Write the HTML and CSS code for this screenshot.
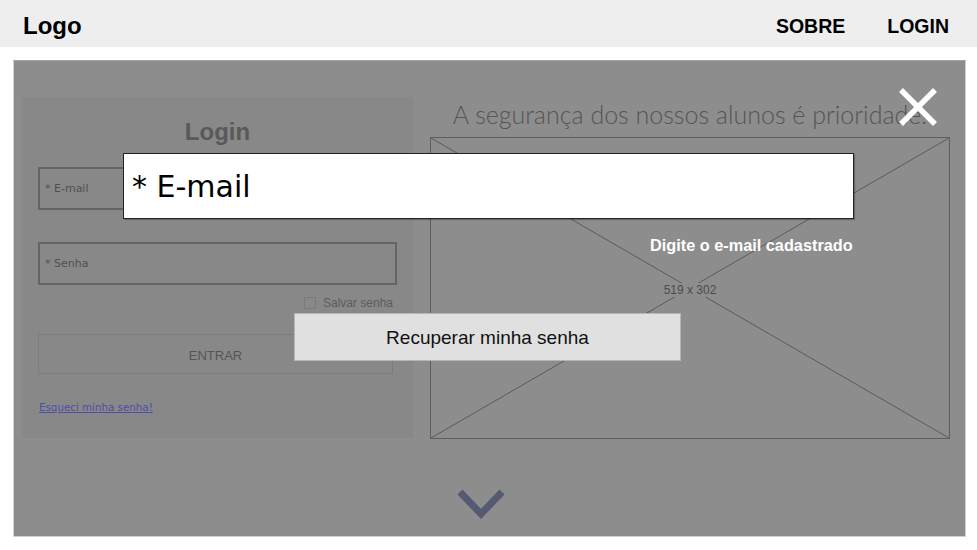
FILE: index.html
```html
<!DOCTYPE html>
<html lang="pt-BR">
<head>
<meta charset="utf-8">
<title>Login</title>
<link rel="stylesheet" href="styles.css">
</head>
<body>
<header class="topbar">
  <div class="logo">Logo</div>
  <nav class="nav">
    <a class="nav-link">SOBRE</a>
    <a class="nav-link">LOGIN</a>
  </nav>
</header>

<main class="stage">
  <div class="content">
    <section class="login-card">
      <h2 class="login-title">Login</h2>
      <div class="field field-email">* E-mail</div>
      <div class="field field-pass">* Senha</div>
      <label class="remember"><span class="check"></span>Salvar senha</label>
      <div class="btn-enter">ENTRAR</div>
      <a class="forgot">Esqueci minha senha!</a>
    </section>
    <section class="hero">
      <h1 class="hero-title">A segurança dos nossos alunos é prioridade.</h1>
      <div class="placeholder">
        <svg class="ph-lines" viewBox="0 0 100 100" preserveAspectRatio="none">
          <line x1="0" y1="0" x2="100" y2="100" vector-effect="non-scaling-stroke"/>
          <line x1="100" y1="0" x2="0" y2="100" vector-effect="non-scaling-stroke"/>
        </svg>
        <span class="ph-label">519 x 302</span>
      </div>
    </section>
  </div>
  <div class="scroll-down">
    <svg width="48" height="32" viewBox="0 0 48 32"><polyline points="3,3 24,25 45,3" fill="none" stroke="#535a72" stroke-width="7"/></svg>
  </div>

  <div class="modal">
    <div class="modal-input">* E-mail</div>
    <div class="modal-hint">Digite o e-mail cadastrado</div>
    <div class="modal-btn">Recuperar minha senha</div>
    <svg class="modal-close" width="40" height="40" viewBox="0 0 40 40">
      <line x1="3" y1="3" x2="37" y2="37"/>
      <line x1="37" y1="3" x2="3" y2="37"/>
    </svg>
  </div>
</main>
</body>
</html>
```

FILE: styles.css
```css
* { box-sizing: border-box; }
html, body { margin: 0; padding: 0; background: #ffffff; }
body { font-family: "Liberation Sans", Arial, sans-serif; width: 977px; height: 550px; overflow: hidden; }

.topbar {
  height: 47px;
  background: #eeeeee;
  display: flex;
  align-items: center;
  justify-content: space-between;
  padding: 5px 28px 0 23px;
}
.logo { font-weight: bold; font-size: 24px; color: #000; }
.nav { display: flex; gap: 42px; }
.nav-link { font-weight: bold; font-size: 19.5px; color: #000; }

.stage {
  position: relative;
  margin: 13px 11px 0 13px;
  height: 477px;
  background: #8d8d8d;
  border: 1px solid #d2d2d2;
  border-top-color: #a0a0a0;
}
.content {
  display: flex;
  gap: 17px;
  padding: 36px 0 0 8px;
}

.login-card {
  width: 391px;
  height: 341px;
  background: #888888;
  padding: 20px 16px 0 16px;
  display: flex;
  flex-direction: column;
}
.login-title {
  margin: 0;
  text-align: center;
  font-size: 24px;
  line-height: 30px;
  font-weight: bold;
  color: #595959;
}
.field {
  height: 43px;
  border: 2px solid #646464;
  border-radius: 1px;
  font-family: "Comic Sans MS", "DejaVu Sans", sans-serif;
  font-size: 11px;
  color: #505050;
  display: flex;
  align-items: center;
  padding-left: 5px;
}
.field-email { margin-top: 20px; }
.field-pass { margin-top: 32px; }
.remember {
  margin-top: 11px;
  align-self: flex-end;
  margin-right: 4px;
  display: flex;
  align-items: center;
  gap: 7px;
  font-size: 12px;
  line-height: 14px;
  color: #5c5c5c;
}
.check { width: 12px; height: 12px; border: 1px solid #7a7a7a; }
.btn-enter {
  margin-top: 24px;
  width: 355px;
  height: 40px;
  padding-top: 2px;
  border: 1px solid #7c7c7c;
  display: flex;
  align-items: center;
  justify-content: center;
  font-size: 13px;
  color: #555555;
}
.forgot {
  margin-top: 26px;
  margin-left: 1px;
  font-family: "Comic Sans MS", "DejaVu Sans", sans-serif;
  font-size: 10.3px;
  line-height: 14px;
  color: #4b4fa8;
  text-decoration: underline;
}

.hero { width: 520px; display: flex; flex-direction: column; }
.hero-title {
  margin: 0;
  height: 40px;
  padding-top: 2px;
  text-align: center;
  font-family: "Lato", "Open Sans", sans-serif;
  font-weight: 300;
  font-size: 25px;
  line-height: 30px;
  color: #555555;
  white-space: nowrap;
}
.placeholder {
  position: relative;
  height: 302px;
  border: 1.5px solid #5e5e5e;
  display: flex;
  align-items: center;
  justify-content: center;
}
.ph-lines { position: absolute; inset: 0; width: 100%; height: 100%; }
.ph-lines line { stroke: #5a5a5a; stroke-width: 1; }
.ph-label {
  position: relative;
  font-size: 12px;
  color: #4c4c4c;
  background: #8d8d8d;
  padding: 0 1px;
  margin-top: 3px;
}

.scroll-down {
  position: absolute;
  left: 443px;
  top: 428px;
  line-height: 0;
}

.modal { position: absolute; inset: 0; }
.modal-input {
  position: absolute;
  left: 109px;
  top: 92px;
  width: 731px;
  height: 66px;
  background: #ffffff;
  border: 1px solid #222222;
  box-shadow: 1px 1px 1px rgba(0,0,0,0.25);
  font-family: "Comic Sans MS", "DejaVu Sans", sans-serif;
  font-size: 30px;
  color: #000;
  display: flex;
  align-items: center;
  padding-left: 8px;
}
.modal-hint {
  position: absolute;
  left: 636px;
  top: 175px;
  font-weight: bold;
  font-size: 16.3px;
  line-height: 18px;
  color: #ffffff;
}
.modal-btn {
  position: absolute;
  left: 280px;
  top: 252px;
  width: 387px;
  height: 48px;
  padding-top: 1px;
  background: #e0e0e0;
  border: 1px solid #b5b5b5;
  display: flex;
  align-items: center;
  justify-content: center;
  font-size: 19px;
  color: #111111;
}
.modal-close { position: absolute; left: 884px; top: 26px; }
.modal-close line { stroke: #ffffff; stroke-width: 5.5; stroke-linecap: butt; }
```
